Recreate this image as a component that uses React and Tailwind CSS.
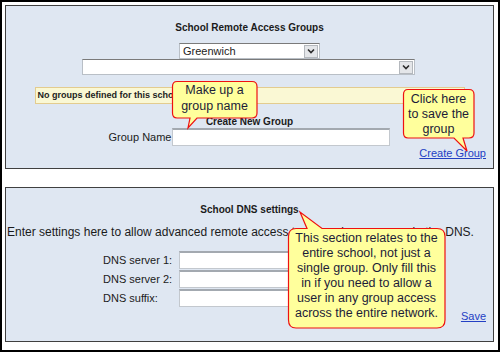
function Chevron() {
  return (
    <svg width="8" height="6" viewBox="0 0 8 6">
      <path d="M1 1.5 L4 4.5 L7 1.5" fill="none" stroke="#2b2b2b" strokeWidth="1.6" />
    </svg>
  )
}

function Select({ value, width }) {
  return (
    <div className={`flex h-[16px] items-center justify-between border border-[#b9bfc6] border-t-[#7a7a7a] bg-white pl-[3px] pr-[1px] ${width}`}>
      <span className="text-[11px] leading-none text-[#222]">{value}</span>
      <span className="flex h-[13px] w-[14px] items-center justify-center border border-[#b4b8bd] bg-[#e4e6e9]">
        <Chevron />
      </span>
    </div>
  )
}

function Field({ width }) {
  return <div className={`h-[18px] border border-[#c3c8ce] border-t-2 border-t-[#a3a9b0] bg-white ${width}`} />
}

export default function App() {
  return (
    <div className="relative h-[352px] w-[500px] border-2 border-black bg-white pl-[3px] pr-[4px] pt-[3px] font-['Liberation_Sans',Arial,sans-serif] text-[#1b1b1b]">
      {/* REMOTE ACCESS GROUPS */}
      <section className="flex h-[164px] flex-col items-center border border-[#404040] bg-[#dfe7f2] pt-[16px]">
        <h2 className="text-[10px] font-bold leading-[12px]">School Remote Access Groups</h2>
        <div className="mt-[9px]">
          <Select value="Greenwich" width="w-[141px]" />
        </div>
        <Select value="" width="w-[333px] translate-x-[-1px]" />
        <div className="mt-[12px] flex h-[17px] w-[430px] items-center border border-[#e3cc8f] bg-[#faf8d4] pl-[2px]">
          <span className="text-[9px] font-bold text-[#222]">No groups defined for this school</span>
        </div>
        <h3 className="mt-[12px] text-[10px] font-bold leading-[12px]">Create New Group</h3>
        <div className="flex items-center gap-[1px]">
          <label className="text-[11px]">Group Name</label>
          <Field width="w-[218px]" />
        </div>
        <div className="mt-px flex w-full justify-end pr-[7px]">
          <a className="text-[11px] leading-[13px] text-[#2340c4] underline">Create Group</a>
        </div>
      </section>

      {/* DNS SETTINGS */}
      <section className="mt-[18px] flex h-[155px] flex-col border border-[#404040] bg-[#dfe7f2] pt-[16px]">
        <h2 className="text-center text-[10px] font-bold leading-[12px]">School DNS settings</h2>
        <p className="mt-[9px] pl-px text-[12px] leading-[14px]">
          Enter settings here to allow advanced remote access to network resources via the DNS.
        </p>
        <div className="mt-[12px] ml-[97px] flex flex-col gap-px">
          {['DNS server 1:', 'DNS server 2:', 'DNS suffix:'].map((l) => (
            <div key={l} className="flex items-center">
              <span className="w-[76px] text-[11px]">{l}</span>
              <Field width="w-[200px] h-[17px]" />
            </div>
          ))}
        </div>
        <div className="mt-[3px] flex justify-end pr-[7px]">
          <a className="text-[11px] leading-[13px] text-[#2340c4] underline">Save</a>
        </div>
      </section>

      {/* CALLOUTS */}
      <svg className="pointer-events-none absolute left-[-2px] top-[-2px]" width="500" height="352">
        <g fill="#ffff9c" stroke="#ee1111" strokeWidth="1.2">
          <path d="M177,81.5 H252 Q257,81.5 257,86.5 V113 Q257,118 252,118 H197 L188,128 L190,118 H177 Q172.5,118 172.5,113 V86.5 Q172.5,81.5 177,81.5 Z" />
          <path d="M408,89.5 H469 Q474,89.5 474,94.5 V133 Q474,138 469,138 H463 L467,151 L454,138 H408 Q403.5,138 403.5,133 V94.5 Q403.5,89.5 408,89.5 Z" />
          <path d="M296,228.5 H307 L300,212 L322,228.5 H437 Q445,228.5 445,236.5 V320 Q445,328 437,328 H296 Q288.5,328 288.5,320 V236.5 Q288.5,228.5 296,228.5 Z" />
        </g>
      </svg>
      <div className="absolute left-[170px] top-[80px] w-[85px] text-center text-[12.5px] leading-[16px] text-[#1c1c38]">
        Make up a<br />group name
      </div>
      <div className="absolute left-[401px] top-[90px] w-[71px] text-center text-[12.5px] leading-[15px] text-[#1c1c38]">
        Click here<br />to save the<br />group
      </div>
      <div className="absolute left-[286px] top-[229px] w-[157px] text-center text-[12.5px] leading-[15px] text-[#1c1c38]">
        This section relates to the<br />entire school, not just a<br />single group. Only fill this<br />in if you need to allow a<br />user in any group access<br />across the entire network.
      </div>
    </div>
  )
}
